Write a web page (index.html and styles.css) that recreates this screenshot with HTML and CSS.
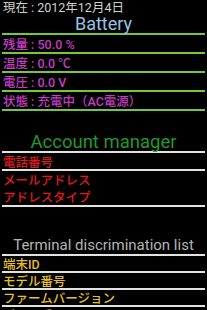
FILE: index.html
```html
<!DOCTYPE html>
<html lang="ja">
  <head>
    <meta charset="UTF-8" />
    <meta name="viewport" content="width=device-width, initial-scale=1.0" />
    <title>端末情報</title>
    <link rel="stylesheet" href="styles.css">
  </head>
  <body>
    <div class="date">現在 : 2012年12月4日</div>

    <div class="section battery">
      <h2 class="title">Battery</h2>
      <div class="row">残量 : 50.0 %</div>
      <div class="row">温度 : 0.0 ℃</div>
      <div class="row">電圧 : 0.0 V</div>
      <div class="row">状態 : 充電中（AC電源）</div>
    </div>

    <div class="section account">
      <h2 class="title">Account manager</h2>
      <div class="row first">電話番号</div>
      <div class="row plain">メールアドレス</div>
      <div class="row">アドレスタイプ</div>
    </div>

    <div class="section terminal">
      <h2 class="title">Terminal discrimination list</h2>
      <div class="row">端末ID</div>
      <div class="row">モデル番号</div>
      <div class="row">ファームバージョン</div>
      <div class="row">ビルド番号</div>
    </div>
  </body>
</html>
```

FILE: styles.css
```css
body {
  margin: 0;
  padding: 0;
  background-color: #000;
  font-family: Roboto, "Noto Sans CJK JP", sans-serif;
  overflow: hidden;
}
.date {
  height: 15px;
  line-height: 15px;
  font-size: 12.5px;
  padding-left: 3px;
  color: #d0d0d0;
}
.section {
  margin: 0 2px;
}
.title {
  margin: 0;
  font-weight: normal;
  text-align: center;
  font-size: 18px;
  line-height: 18px;
  height: 18px;
  border-bottom: 2px solid;
}
.row {
  font-size: 12.5px;
  font-weight: 500;
  padding-left: 1px;
  border-bottom: 2px solid;
  display: flex;
  align-items: center;
  white-space: nowrap;
}

/* battery */
.battery .title {
  color: #95c3e3;
  border-color: #74c83a;
}
.battery .row {
  height: 17px;
  color: #c43cc6;
  border-color: #74c83a;
}

/* account */
.account {
  margin-top: 22px;
}
.account .title {
  font-size: 18.5px;
  color: #24982a;
  border-color: #e2e2e2;
}
.account .row {
  height: 17px;
  color: #e21a1a;
  border-color: #e2e2e2;
}
.account .row.first {
  height: 16px;
}
.account .row.plain {
  border-bottom: none;
}

/* terminal */
.terminal {
  margin-top: 30px;
}
.terminal .title {
  font-size: 15px;
  line-height: 17px;
  height: 17px;
  color: #b4b4b4;
  border-color: #e2e2e2;
}
.terminal .row {
  height: 15px;
  color: #e6c024;
  border-color: #e2e2e2;
}
```
